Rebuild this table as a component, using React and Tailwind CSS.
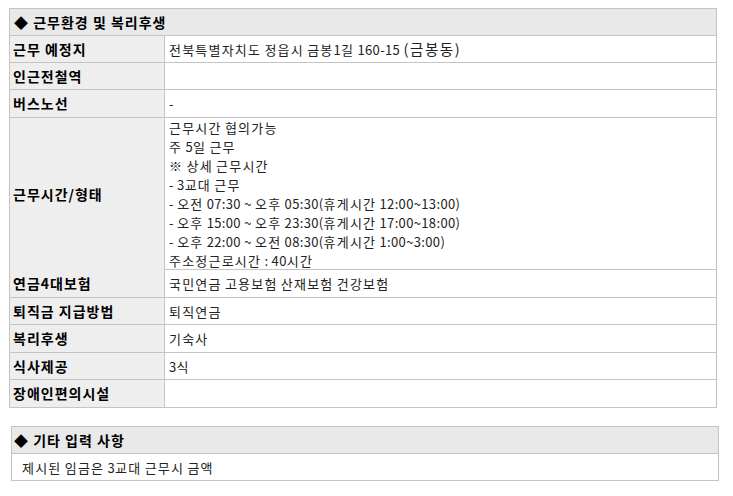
import React from "react";

const HANGUL = /([\uAC00-\uD7A3\u3131-\u318E\u203B]+)/;

function T({ text, hangul = "tracking-[1.2px]", latin = "tracking-[0.35px]" }) {
  const parts = text.split(HANGUL).filter((p) => p !== "");
  return (
    <>
      {parts.map((p, i) =>
        HANGUL.test(p) ? (
          <span key={i} className={hangul}>
            {p}
          </span>
        ) : (
          <span key={i} className={latin}>
            {p}
          </span>
        )
      )}
    </>
  );
}

const address = (
  <>
    <T text="전북특별자치도 정읍시 금봉1길 160-15 " />
    <span className="text-[14.5px] leading-[19px] tracking-[1.6px]">(금봉동)</span>
  </>
);

const rows = [
  { label: "근무 예정지", h: "h-[27px]", value: [address] },
  { label: "인근전철역", h: "h-[27px]", value: [""] },
  { label: "버스노선", h: "h-[28px]", value: ["-"] },
  {
    label: "근무시간/형태",
    h: "h-[152px]",
    value: [
      "근무시간 협의가능",
      "주 5일 근무",
      "※ 상세 근무시간",
      "- 3교대 근무",
      "- 오전 07:30 ~ 오후 05:30(휴게시간 12:00~13:00)",
      "- 오후 15:00 ~ 오후 23:30(휴게시간 17:00~18:00)",
      "- 오후 22:00 ~ 오전 08:30(휴게시간 1:00~3:00)",
      "주소정근로시간 : 40시간",
    ],
  },
  { label: "연금4대보험", h: "h-[28px]", value: ["국민연금 고용보험 산재보험 건강보험"] },
  { label: "퇴직금 지급방법", h: "h-[27px]", value: ["퇴직연금"] },
  { label: "복리후생", h: "h-[28px]", value: ["기숙사"] },
  { label: "식사제공", h: "h-[27px]", value: ["3식"] },
  { label: "장애인편의시설", h: "h-[27px]", value: [""] },
];

export default function App() {
  return (
    <div
      className="w-[733px] h-[496px] bg-white text-[13px] text-[#222]"
      style={{ fontFamily: '"Noto Sans CJK KR", "Noto Sans", sans-serif' }}
    >
      <div className="pt-[8px] pl-[9px]">
        <div className="w-[708px] border border-[#c4c4c4]">
          <div className="h-[27px] bg-[#e9e9e9] border-b border-[#c4c4c4] flex items-center pl-[4px] font-bold text-[14px] tracking-[1px] leading-[19px] text-black">
            ◆ 근무환경 및 복리후생
          </div>
          {rows.map((r, i) => (
            <div
              key={i}
              className={
                "grid grid-cols-[155px_1fr] " +
                r.h +
                (i < rows.length - 1 ? " border-b border-[#c4c4c4]" : "")
              }
            >
              <div className="bg-[#eeeeee] border-r border-[#c4c4c4] flex items-center pl-[3px] font-bold text-[14px] tracking-[1px] leading-[19px] text-black">
                {r.label}
              </div>
              <div className="flex flex-col justify-center pl-[4px] text-[#222] leading-[19px]">
                {r.value.map((v, j) => (
                  <div key={j} className="whitespace-nowrap">
                    {typeof v === "string" ? <T text={v} /> : v}
                  </div>
                ))}
              </div>
            </div>
          ))}
        </div>
      </div>
      <div className="pt-[18px] pl-[11px]">
        <div className="w-[708px] border border-[#c4c4c4]">
          <div className="h-[27px] bg-[#e9e9e9] border-b border-[#c4c4c4] flex items-center pl-[2px] font-bold text-[14px] tracking-[1px] leading-[19px] text-black">
            ◆ 기타 입력 사항
          </div>
          <div className="h-[26px] flex items-center pl-[10px] text-[#222] leading-[19px]">
            <div className="whitespace-nowrap">
              <T text="제시된 임금은 3교대 근무시 금액" />
            </div>
          </div>
        </div>
      </div>
    </div>
  );
}
